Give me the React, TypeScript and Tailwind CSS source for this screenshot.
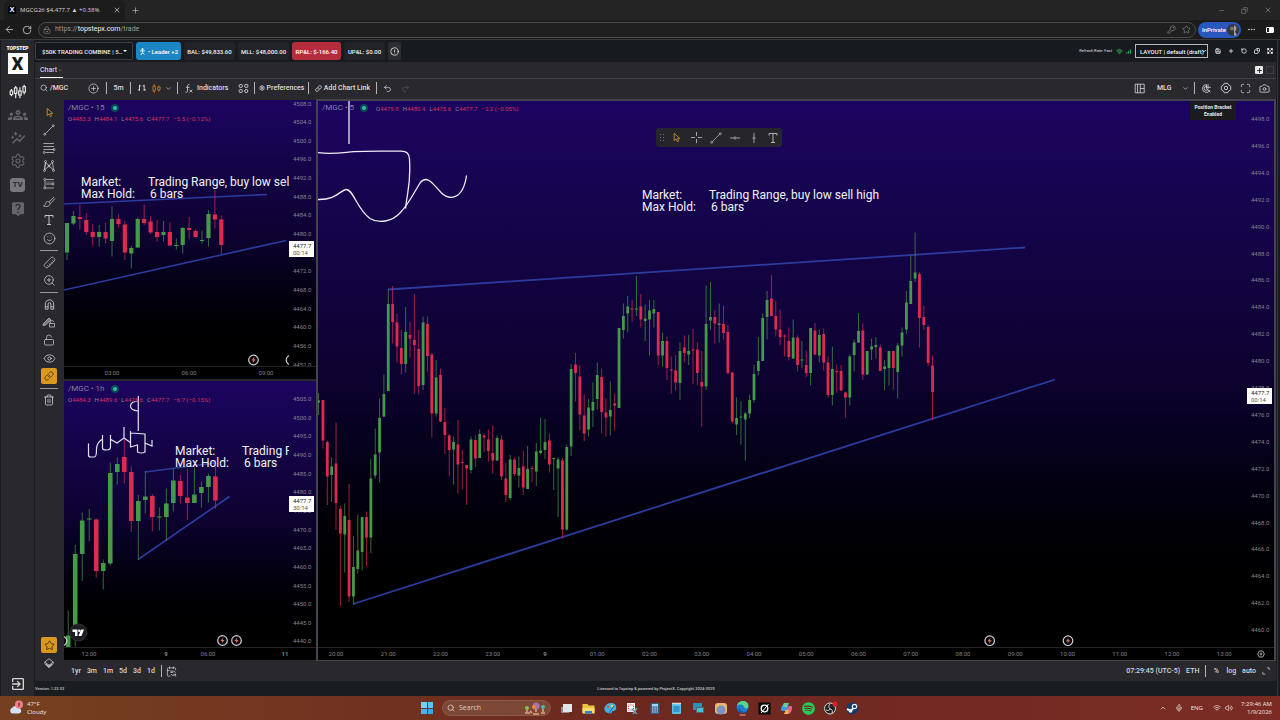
import type { ReactNode } from "react";
import {
  ArrowLeft, Camera, ChevronDown, ChevronUp, CirclePlus, Ellipsis, KeyRound, Link, LockKeyhole, LockOpen, Magnet, Maximize,
  Mic, Minus, Plus, Redo2, RotateCw, RotateCcw, Ruler, Save, Search, Settings, Smile, Star, Trash2, Undo2, Volume2, Wifi, X, ZoomIn,
  Copy, Eye, CircleAlert, CalendarSync, Expand,
} from "lucide-react";
import { MdAutoGraph, MdExitToApp, MdOutlineGroups, MdLiveHelp, MdSignalCellularAlt } from "react-icons/md";
import { FaSpotify } from "react-icons/fa";

// direction, high, body top, body bottom, low
type Candle = ["u" | "d", number, number, number, number];

const candles5m: Candle[] = [
  ["u", 393, 400.5, 402.5, 415], ["d", 400, 400, 440.5, 448.5], ["d", 440.5, 442, 476.5, 505], ["u", 457.5, 466.5, 475, 502],
  ["d", 422.5, 463.5, 503, 530], ["d", 505.5, 509, 533.5, 606], ["u", 503.5, 516, 534.5, 572.5], ["d", 484, 520, 596.5, 602],
  ["u", 536, 567, 596.5, 604.5], ["u", 514.5, 550.5, 569, 573.5], ["u", 517, 517, 552, 570.5], ["d", 511.5, 517, 537.5, 566.5],
  ["u", 458.5, 478.5, 537.5, 553.5], ["u", 428.5, 454.5, 475.5, 478.5], ["u", 398.5, 418, 452.5, 482.5], ["u", 374.5, 394, 416.5, 417],
  ["u", 289, 304, 391, 391], ["d", 286, 304, 322, 343.5], ["d", 313.5, 322.5, 346.5, 362.5], ["d", 330, 348, 364, 374.5],
  ["u", 307, 332, 364, 372.5], ["d", 322, 335, 338.5, 357.5], ["d", 294, 340, 345, 393.5], ["d", 330, 349, 386, 394.5],
  ["u", 316.5, 322.5, 385, 390], ["d", 316.5, 324, 356, 371.5], ["d", 353, 354.5, 413.5, 437.5], ["u", 360, 377.5, 413.5, 416.5],
  ["d", 368.5, 375, 421.5, 422], ["d", 408, 422, 435, 454], ["d", 434, 435.5, 450, 476.5], ["u", 436.5, 442, 449.5, 484.5],
  ["d", 420, 444.5, 464.5, 493.5], ["d", 450, 462, 463, 489.5], ["d", 464.5, 465, 468.5, 505], ["u", 436.5, 439.5, 470, 473.5],
  ["d", 435, 440, 458.5, 467], ["u", 429.5, 434, 458, 458], ["d", 433.5, 435.5, 437.5, 452], ["d", 429.5, 439.5, 451, 461.5],
  ["d", 425.5, 453, 460.5, 473.5], ["u", 435.5, 438, 460.5, 461], ["d", 435.5, 439.5, 476.5, 480], ["d", 462.5, 478.5, 495, 502],
  ["u", 455, 459.5, 498, 500.5], ["d", 457.5, 459.5, 474, 476], ["u", 456.5, 468, 475.5, 487.5], ["d", 450.5, 466.5, 487.5, 495],
  ["u", 446, 469, 489, 489], ["d", 466, 468, 469, 482.5], ["u", 443, 451.5, 471.5, 486], ["u", 417.5, 450.5, 453, 454.5],
  ["u", 419, 442, 450, 459], ["d", 433.5, 440.5, 464.5, 472.5], ["u", 457.5, 458, 459, 490], ["u", 457.5, 459.5, 468.5, 517],
  ["d", 458, 460.5, 529.5, 538.5], ["u", 444.5, 447, 529.5, 531], ["u", 364, 369, 446.5, 456], ["d", 353, 364.5, 373, 401.5],
  ["d", 365, 376.5, 414.5, 430.5], ["d", 394.5, 415.5, 433.5, 441], ["u", 399, 407.5, 429.5, 436.5], ["u", 382.5, 402, 410.5, 427],
  ["u", 362.5, 375, 399, 409.5], ["d", 368.5, 377, 412, 433.5], ["d", 398.5, 412.5, 417.5, 436.5], ["u", 381.5, 410, 416.5, 435.5],
  ["d", 393.5, 403.5, 405.5, 430.5], ["u", 328, 328, 408, 408], ["u", 303.5, 316, 330, 338.5], ["u", 296, 306.5, 313.5, 332.5],
  ["d", 300, 308.5, 309, 321.5], ["u", 276, 308.5, 309, 316], ["d", 294, 306.5, 319.5, 327.5], ["u", 304.5, 318.5, 321, 341],
  ["u", 300, 310.5, 319.5, 355.5], ["u", 300, 309, 313.5, 327.5], ["d", 312, 312, 355.5, 365], ["u", 332.5, 341, 355.5, 366.5],
  ["d", 336.5, 341, 368, 380], ["d", 356.5, 369.5, 370, 393.5], ["d", 355, 370.5, 382.5, 390.5], ["u", 342.5, 351, 383, 400],
  ["d", 335.5, 347.5, 353, 362.5], ["u", 335, 351, 354.5, 365], ["d", 329, 349.5, 350, 384], ["d", 342.5, 349.5, 373, 385.5],
  ["d", 351, 382, 386.5, 426.5], ["u", 285.5, 324, 386.5, 390], ["u", 282, 317, 320.5, 330], ["d", 310, 317, 323.5, 343.5],
  ["u", 303.5, 323.5, 325, 342.5], ["d", 305.5, 324, 333, 339.5], ["d", 325, 332, 373, 374.5], ["d", 372, 372.5, 421.5, 423.5],
  ["u", 397.5, 418, 424.5, 435], ["u", 401.5, 416.5, 417.5, 444.5], ["u", 412, 413.5, 419.5, 460.5], ["u", 394.5, 400, 413.5, 418],
  ["u", 365, 374, 400, 402.5], ["u", 337, 361, 371, 375.5], ["u", 313.5, 318, 361, 361], ["u", 291, 300, 317, 339.5],
  ["d", 275, 298.5, 316, 316], ["d", 301, 316, 329.5, 336.5], ["d", 309.5, 329.5, 337, 345], ["d", 334.5, 335.5, 336.5, 356.5],
  ["d", 327.5, 341, 357, 360.5], ["u", 319.5, 337.5, 358.5, 359], ["d", 335.5, 337.5, 365, 371.5], ["u", 341, 359.5, 360, 368],
  ["d", 350.5, 365, 373, 377], ["u", 328, 328, 373, 385.5], ["d", 323, 330.5, 354.5, 355], ["u", 329.5, 335, 355.5, 362.5],
  ["d", 328.5, 334, 362.5, 370.5], ["d", 356.5, 362.5, 395, 397.5], ["u", 346.5, 369, 395, 405.5], ["d", 364.5, 371, 372, 392.5],
  ["d", 365, 371, 390.5, 391], ["d", 391.5, 392.5, 397.5, 417.5], ["u", 354.5, 356.5, 397.5, 405.5], ["u", 339.5, 342.5, 355, 371.5],
  ["u", 313, 331, 342.5, 343], ["d", 323.5, 330.5, 374.5, 380], ["u", 351, 351, 374.5, 375], ["u", 338.5, 346.5, 349.5, 360],
  ["u", 337, 345, 347, 358.5], ["d", 344.5, 347.5, 371, 371], ["u", 360, 366.5, 369, 390.5], ["u", 351, 351, 368, 385.5],
  ["d", 351, 351, 368, 389.5], ["u", 343, 345.5, 372, 398.5], ["u", 327.5, 332.5, 345.5, 356.5], ["u", 291, 302.5, 329.5, 334],
  ["u", 255.5, 281, 304, 304], ["u", 232.5, 272.5, 278.5, 282], ["d", 272, 274, 318, 347.5], ["d", 305.5, 317, 325, 330],
  ["d", 325, 327, 363, 366], ["d", 355.5, 365.5, 392, 420],
];

const candles15m: Candle[] = [
  ["u", 223, 223, 252.5, 260], ["u", 211, 216, 223.5, 225], ["d", 204.5, 217, 219, 229.5], ["d", 213, 220, 232, 235],
  ["d", 224, 232, 237, 245.5], ["u", 225, 232, 237, 246.5], ["d", 223, 232, 238.5, 243.5], ["u", 206.5, 219, 241, 256.5],
  ["d", 214.5, 219, 224, 227.5], ["d", 221, 224.5, 252.5, 260], ["u", 246, 248, 253.5, 268.5], ["u", 217.5, 219, 247.5, 248],
  ["d", 204.5, 219, 223, 225], ["d", 216.5, 221.5, 232.5, 234], ["d", 220, 232, 237, 241.5], ["u", 221, 232, 235, 241.5],
  ["d", 222.5, 232, 245.5, 246], ["u", 238.5, 245, 246, 249.5], ["u", 227, 228, 245, 253.5], ["d", 217, 228, 230, 239.5],
  ["d", 229, 231, 237, 237], ["u", 230.5, 240, 240.5, 243.5], ["u", 210, 214, 238, 246.5], ["d", 190, 214.5, 219.5, 228.5],
  ["d", 215.5, 219.5, 245, 254],
];

const candles1h: Candle[] = [
  ["u", 610.5, 635.5, 647, 647], ["u", 545, 554, 625, 646.5], ["u", 512.5, 520.5, 554, 581], ["u", 509, 518.5, 519.5, 541.5],
  ["d", 518.5, 519.5, 571, 577.5], ["u", 559.5, 563, 571, 589.5], ["u", 462.5, 473, 563.5, 565.5], ["u", 457.5, 464, 472, 484.5],
  ["d", 438, 457, 472, 483.5], ["d", 466.5, 472, 521, 532], ["u", 495, 501, 521, 560], ["u", 471, 496.5, 500, 513.5],
  ["d", 494, 496, 517, 531.5], ["u", 507.5, 516.5, 517.5, 530.5], ["u", 488.5, 503.5, 517, 540.5], ["u", 468.5, 480.5, 503, 511.5],
  ["d", 475, 481, 496, 503.5], ["d", 468.5, 497.5, 503, 520], ["u", 467.5, 494.5, 503, 503], ["u", 481.5, 487, 493, 507.5],
  ["u", 473.5, 476, 487, 502.5], ["d", 460, 476.5, 500.5, 508.5],
];

function Candles({ data, start, step, width }: { data: Candle[]; start: number; step: number; width: number }) {
  return (
    <g>
      {data.map(([dir, high, top, bottom, low], i) => {
        const x = start + i * step;
        const color = dir === "u" ? "#449a48" : "#dc2a50";
        return (
          <g key={i} fill={color}>
            <rect x={x - 0.5} y={high} width={1} height={low - high} opacity={0.7} />
            <rect x={x - width / 2} y={top} width={width} height={Math.max(1, bottom - top)} />
          </g>
        );
      })}
    </g>
  );
}

function Note({ x, y, market }: { x: number; y: number; market: string }) {
  return (
    <g fill="#f2f2f5" className="text-[12px]">
      <text x={x} y={y}>Market:</text>
      <text x={x + 67} y={y}>{market}</text>
      <text x={x} y={y + 12}>Max Hold:</text>
      <text x={x + 69} y={y + 12}>6 bars</text>
    </g>
  );
}

function NewsEvent({ x, y }: { x: number; y: number }) {
  return (
    <g transform={`translate(${x} ${y})`}>
      <circle r="4.8" fill="#0b0710" stroke="#cfcfd4" strokeWidth="1.2" />
      <path d="M.8-3-2.100.5H-.2L-.8 3 2.100-.5H.2Z" fill="#f0745c" />
    </g>
  );
}

type PaneProps = {
  interval: string;
  ohlc: string[];
  change: string;
  inline?: boolean;
  prices: { first: number; y: number; gap: number; step: number; count: number };
  last: { y: number; timer: string };
  times: [string, number][];
  origin: [number, number];
  children: ReactNode;
  gear?: boolean;
};

function ChartPane({ interval, ohlc, change, inline, prices, last, times, origin, children, gear }: PaneProps) {
  const [ox, oy] = origin;
  const labels = Array.from({ length: prices.count }, (_, i) => ({
    y: prices.y + i * prices.gap,
    text: (prices.first - i * prices.step).toFixed(1),
  })).filter((l) => l.y < last.y + 3 || l.y > last.y + 13);
  return (
    <section className="relative flex min-h-0 min-w-0 flex-1 flex-col bg-linear-to-b from-[#1c0560] via-[#0d022f] to-black to-95%">
      <div className="flex min-h-0 flex-1">
        <svg className="h-full min-w-0 flex-1" role="img" aria-label={`/MGC ${interval} chart`}>
          <g transform={`translate(${-ox} ${-oy})`}>{children}</g>
        </svg>
        <svg className="h-full w-[27px]">
          <g fill="#85828e" className="text-[6px]">
            {labels.map((l) => (
              <text key={l.text} x={4} y={l.y - oy + 2}>{l.text}</text>
            ))}
          </g>
          <rect y={last.y - oy} width={25} height={16} fill="#fff" />
          <g fill="#222" className="text-[6px]">
            <text x={4} y={last.y - oy + 7}>4477.7</text>
            <text x={4} y={last.y - oy + 14} fill="#555">{last.timer}</text>
          </g>
        </svg>
      </div>
      <div className="flex h-[13px] shrink-0 border-t border-[#26242b] bg-black">
        <svg className="h-3 min-w-0 flex-1">
          <g fill="#85838a" textAnchor="middle" className="text-[6px]">
            {times.map(([label, x]) => (
              <text key={label} x={x - ox} y={8} fontWeight={label.length < 3 ? 700 : 400}>{label}</text>
            ))}
          </g>
        </svg>
        <div className="flex w-[27px] items-center justify-center">
          {gear && (
            <svg width="8" height="8" viewBox="0 0 8 8" fill="none" stroke="#a5a5aa">
              <path d="M2.3 1h3.4L7.4 4 5.7 7H2.3L.6 4Z" />
              <circle cx="4" cy="4" r="1" />
            </svg>
          )}
        </div>
      </div>
      <div className={inline ? "absolute top-px left-1 flex items-center gap-2" : "absolute top-0.5 left-1 flex flex-col"}>
        <div className="flex h-3 items-center gap-1.5 text-[8px] text-[#85829a]">
          /MGC • {interval}
          <span className="size-2 rounded-full border-2 border-[#0c4458] bg-[#2fc0a0]" />
        </div>
        <div className="flex h-2 items-center gap-1 text-[6px] text-[#d8305c]">
          {ohlc.map((v) => (
            <span key={v}><span className="text-[#8b88a0]">{v[0]}</span>{v.slice(1)}</span>
          ))}
          <span>{change}</span>
        </div>
      </div>
    </section>
  );
}

function Icon({ children, size = 13, box = 28, w = 1.6 }: { children: ReactNode; size?: number; box?: number; w?: number }) {
  return (
    <svg width={size} height={size} viewBox={`0 0 ${box} ${box}`} fill="none" stroke="currentColor" strokeWidth={w} strokeLinejoin="round">
      {children}
    </svg>
  );
}

const CursorIcon = () => (
  <span className="text-[#c08a28]">
    <Icon size={13} w={2}><path d="M9 5v16l4-4 3 6 3-2-3-5h5Z" /></Icon>
  </span>
);
const LineIcon = () => (
  <Icon size={14}><path d="M7 21 21 7" /><circle cx="5.5" cy="22.5" r="2" /><circle cx="22.5" cy="5.5" r="2" /></Icon>
);
const TextIcon = () => (
  <Icon size={14} w={2}><path d="M6 9V5h16v4M14 5v18M10 23h8" /></Icon>
);

const drawTools: { name: string; icon: ReactNode }[] = [
  { name: "Cursor", icon: <CursorIcon /> },
  { name: "Trend line", icon: <LineIcon /> },
  { name: "Fib retracement", icon: <Icon size={14}><path d="M3 5h21M3 11h21M3 17h21M7 23h17" /><circle cx="4.5" cy="23" r="2" /><circle cx="24" cy="17" r="2" /></Icon> },
  { name: "Patterns", icon: <Icon size={14}><path d="M5 22 7 6l7 8 7-8 2 16M5 22l9-8 9 8M7 6l-2 16" /><circle cx="7" cy="5" r="2" /><circle cx="21" cy="5" r="2" /><circle cx="5" cy="23" r="2" /><circle cx="23" cy="23" r="2" /><circle cx="14" cy="14" r="2" /></Icon> },
  { name: "Forecasting", icon: <Icon size={14}><path d="M8 5h16M8 14h12M8 22h16M6 7v13" /><circle cx="5.5" cy="5" r="2" /><circle cx="5.5" cy="22" r="2" /><circle cx="22" cy="14" r="2" /><path d="M9 10h14" strokeDasharray="2 2" /></Icon> },
  { name: "Brush", icon: <Icon size={14}><path d="M3 22c6 2 13 1 13-5 0-3-4-5-7-3-4 3 0 6-6 8ZM14 14 24 4M17 17 26 7" /></Icon> },
  { name: "Text", icon: <TextIcon /> },
  { name: "Icons", icon: <Smile size={13} strokeWidth={1.5} /> },
  { name: "", icon: null },
  { name: "Measure", icon: <Ruler size={13} strokeWidth={1.5} className="rotate-90" /> },
  { name: "Zoom in", icon: <ZoomIn size={13} strokeWidth={1.5} /> },
  { name: "", icon: null },
  { name: "Magnet", icon: <Icon size={13} w={2}><path d="M5 24V13a9 9 0 0 1 18 0v11h-6V13a3 3 0 0 0-6 0v11ZM5 19h6M17 19h6" /></Icon> },
  { name: "Stay in drawing mode", icon: <Icon size={14}><path d="m3 17 11-11 4 4L7 20l-5 1Z" fill="currentColor" fillOpacity=".5" /><rect x="15" y="17" width="10" height="7" /><path d="M17 17v-3c0-4 6-4 6 0" /></Icon> },
  { name: "Lock drawings", icon: <LockOpen size={12} strokeWidth={1.6} /> },
  { name: "Hide drawings", icon: <Eye size={13} strokeWidth={1.5} /> },
];

function ToolSep() {
  return <div className="flex h-1.5 shrink-0 items-center"><span className="h-px w-4.5 bg-[#97979c]" /></div>;
}

function Divider() {
  return <span className="h-3 w-px shrink-0 bg-[#b4b4b8]" />;
}

function BrowserChrome() {
  return (
    <header className="shrink-0 bg-[#242424] font-['Open_Sans',sans-serif] text-[#d8d8d8]">
      <div className="flex h-5 items-center">
        <div className="ml-1 flex h-5 w-[121px] items-center rounded-t-md bg-[#1c1c1c] px-1">
          <span className="flex h-2 w-2 items-center justify-center bg-black text-[7px] font-bold text-white">X</span>
          <span className="ml-1 flex-1 text-[6px] font-medium whitespace-nowrap">MGCG26 $4,477.7 ▲ +0.38%</span>
          <button aria-label="Close tab"><X size={8} /></button>
        </div>
        <button aria-label="New tab" className="ml-1.5"><Plus size={9} strokeWidth={1.5} /></button>
        <div className="ml-auto flex items-center gap-4 pr-2 text-[#9a9a9a]">
          <button aria-label="Minimize"><Minus size={7} strokeWidth={1.5} /></button>
          <button aria-label="Restore"><Copy size={7} strokeWidth={1.8} className="-scale-x-100" /></button>
          <button aria-label="Close"><X size={8} strokeWidth={1.8} /></button>
        </div>
      </div>
      <div className="flex h-[19px] items-center bg-[#1b1b1b] pr-0.5 pl-1">
        <button aria-label="Back" className="w-[18px]"><ArrowLeft size={11} strokeWidth={1.6} /></button>
        <button aria-label="Refresh" className="w-4"><RotateCw size={10} strokeWidth={1.8} /></button>
        <div className="flex h-4 flex-1 items-center rounded-full border border-[#4a4a4a] bg-[#1f1f1f] px-1">
          <LockKeyhole size={8} strokeWidth={1.6} className="text-[#999]" />
          <span className="ml-1 font-['Roboto',sans-serif] text-[7px] text-[#999]">https://<span className="text-[#f0f0f0]">topstepx.com</span>/trade</span>
          <KeyRound size={9} strokeWidth={1.6} className="ml-auto text-[#999]" />
          <Star size={9} strokeWidth={1.6} className="ml-1.5 text-[#999]" />
        </div>
        <button className="ml-0.5 flex h-4 w-[43px] items-center justify-between rounded-full bg-[#2858bd] pr-0.5 pl-1 font-['Roboto',sans-serif] text-[6px] font-medium text-white">
          InPrivate
          <svg width="12" height="12" viewBox="0 0 12 12" className="shrink-0"><circle cx="6" cy="6" r="6" fill="#33353a" /><path d="M6 1.500c3 0 4 2 3 4.500L8 8l2 3-3 1V1.500Z" fill="#a8a29c" /><circle cx="5" cy="4.500" r="2" fill="#77706a" /></svg>
        </button>
        <button aria-label="Menu" className="ml-1.5"><Ellipsis size={9} /></button>
        <button aria-label="Sidebar" className="ml-2.5 flex h-1.5 w-2 justify-end rounded-[1px] border border-white"><span className="h-full w-1 bg-white" /></button>
        <span className="w-1" />
      </div>
    </header>
  );
}

function Rail() {
  return (
    <nav className="flex w-[34px] shrink-0 flex-col items-center border-r border-[#1d1d20] bg-[#29292d] pt-1 text-[#66666a]">
      <div className="text-[5px] leading-[9px] font-black text-white">TOPSTEP</div>
      <div className="mb-1.5 flex h-[21px] w-5 items-center justify-center bg-white text-[18px] leading-none font-black text-[#1a1a1a]">X</div>
      <button aria-label="Trade" className="flex h-[23px] items-center text-[#e4e4e6]">
        <Icon size={17} w={2}>
          <path d="M4 10v12M11 5v20M18 7v18M25 3v16" />
          <rect x="2" y="13" width="4" height="6" fill="#29292d" /><rect x="9" y="8" width="4" height="9" fill="#29292d" />
          <rect x="16" y="13" width="4" height="7" fill="#29292d" /><rect x="23" y="6" width="4" height="9" fill="#29292d" />
        </Icon>
      </button>
      <button aria-label="Community" className="flex h-[23px] items-center"><MdOutlineGroups size={20} /></button>
      <button aria-label="Performance" className="flex h-[23px] items-center"><MdAutoGraph size={16} /></button>
      <button aria-label="Settings" className="flex h-6 items-center"><Settings size={16} strokeWidth={1.6} /></button>
      <button className="flex h-6 items-center"><span className="flex h-[14px] w-[15px] items-center justify-center rounded-[3px] bg-[#78787c] text-[8px] font-bold text-[#29292d]">TV</span></button>
      <button aria-label="Help" className="flex h-6 items-center"><MdLiveHelp size={16} /></button>
      <button aria-label="Log out" className="mt-auto mb-1 text-[#d5d5d8]"><MdExitToApp size={16} /></button>
    </nav>
  );
}

function AccountBar() {
  return (
    <div className="flex h-[22px] shrink-0 items-center gap-[3px] bg-[#171b1f] pr-1 text-[6px] font-medium text-[#f0f0f2]">
      <div className="relative h-[18px] w-[98px]">
        <select aria-label="Account" className="h-full w-full appearance-none rounded-[2px] border border-[#3b3e43] bg-[#14171b] pr-2 pl-1.5">
          <option>$50K TRADING COMBINE | 5…</option>
        </select>
        <span className="pointer-events-none absolute top-1/2 right-1.5 -translate-y-1/2 border-x-2 border-t-2 border-x-transparent border-t-white" />
      </div>
      <button className="flex h-[18px] w-[45px] items-center justify-center gap-0.5 rounded-[3px] bg-[#1c86c2] text-white">
        <Icon size={7} box={12} w={1.6}><circle cx="6" cy="2" r="1.2" fill="currentColor" /><path d="M2 5h8M6 5v3l-3 4M6 8l3 3" /></Icon>
        <span>• Leader +2</span>
      </button>
      <span className="flex h-[18px] w-[51px] items-center justify-center rounded-[3px] bg-[#212327]">BAL: $49,833.60</span>
      <span className="flex h-[18px] w-[51px] items-center justify-center rounded-[3px] bg-[#212327]">MLL: $48,000.00</span>
      <span className="flex h-[18px] w-[49px] items-center justify-center rounded-[3px] bg-[#b52d3a] text-white">RP&amp;L: $-166.40</span>
      <span className="flex h-[18px] w-[41px] items-center justify-center rounded-[3px] bg-[#212327]">UP&amp;L: $0.00</span>
      <button aria-label="Account info" className="flex h-[18px] w-[13px] items-center justify-center rounded-[2px] bg-[#2b2d30]"><CircleAlert size={9} /></button>
      <div className="ml-auto flex items-center gap-1 text-[4px]">
        <span className="text-[#c0c0c4]">Refresh Rate: Fast</span>
        <Wifi size={7} strokeWidth={3} className="text-[#34a853]" />
        <MdSignalCellularAlt size={7} className="-ml-0.5 text-[#34c060]" />
      </div>
      <div className="relative h-3.5 w-[73px]">
        <select aria-label="Layout" className="h-full w-full appearance-none border border-[#b9b9bc] bg-[#14171b] pl-1 text-[6px] font-medium">
          <option>LAYOUT | default (draft)</option>
        </select>
        <ChevronDown size={6} strokeWidth={4} className="pointer-events-none absolute top-1 right-px" />
      </div>
      <div className="ml-1 flex items-center gap-[7px]">
        <button aria-label="Save layout"><Save size={6} strokeWidth={3} /></button>
        <button aria-label="Add layout"><Plus size={6} strokeWidth={3} /></button>
        <button aria-label="Reset layout"><RotateCcw size={6} strokeWidth={3} /></button>
        <button aria-label="Pop out"><Copy size={6} strokeWidth={3} className="-scale-x-100" /></button>
        <button aria-label="Expand"><Expand size={6} strokeWidth={4} /></button>
      </div>
    </div>
  );
}

function ChartToolbar() {
  return (
    <div className="flex h-5 shrink-0 items-center pr-1.5 pb-0.5 pl-[5px] text-[7px] font-medium text-[#dcdce0]">
      <button className="flex w-12 items-center gap-0.5"><Search size={8} strokeWidth={2} />/MGC</button>
      <button aria-label="Compare" className="w-[18px]"><CirclePlus size={11} strokeWidth={1.5} /></button>
      <Divider />
      <button className="w-[23px] text-center">5m</button>
      <Divider />
      <button aria-label="Bar style" className="ml-1.5 w-3.5"><Icon size={10} w={2.6}><path d="M7 5v17M7 19H3M7 8h4M20 5v17M20 8h-4M20 19h5" /></Icon></button>
      <button aria-label="Candles" className="w-3.5 text-[#d07a22]"><Icon size={11} w={2.2}><path d="M8 3v5M8 20v5M20 6v4M20 18v4" /><rect x="5" y="8" width="6" height="12" /><rect x="17" y="10" width="6" height="8" /></Icon></button>
      <button aria-label="Candle menu" className="w-3"><ChevronDown size={7} /></button>
      <Divider />
      <button className="ml-1.5 flex w-[54px] items-center gap-0.5">
        <Icon size={11} w={2}><path d="M14 4c-5-2-5 4-5 8v8c0 4-3 5-5 3M5 11h9M14 17l7 7M21 17l-7 7" /></Icon>
        Indicators
      </button>
      <button aria-label="Layouts" className="w-4">
        <Icon size={11} w={2.2}><rect x="3" y="4" width="8" height="7" rx="2" /><rect x="17" y="4" width="8" height="7" rx="2" /><rect x="3" y="17" width="8" height="7" rx="2" /><circle cx="21" cy="20.5" r="4" /></Icon>
      </button>
      <Divider />
      <button className="flex w-[53px] items-center justify-center gap-0.5"><Settings size={6} strokeWidth={3} />Preferences</button>
      <Divider />
      <button className="flex w-[67px] items-center justify-center gap-0.5"><Link size={7} strokeWidth={2.5} />Add Chart Link</button>
      <Divider />
      <button aria-label="Undo" className="ml-1.5 w-[18px]"><Undo2 size={9} strokeWidth={1.8} /></button>
      <button aria-label="Redo" className="text-[#55555a]"><Redo2 size={9} strokeWidth={1.8} /></button>
      <div className="ml-auto flex items-center">
        <button aria-label="Grid layout" className="w-[23px]"><Icon size={11} w={2}><rect x="3" y="3" width="23" height="22" /><path d="M16 3v22M16 14h10M9 3v22" /></Icon></button>
        <button className="w-[25px] text-left">MLG</button>
        <button aria-label="Layout menu" className="w-3"><ChevronDown size={7} /></button>
        <Divider />
        <button aria-label="Position bracket" className="ml-1.5 w-[19px]"><Icon size={11} w={2}><path d="M14 4a10 10 0 1 0 9 14M14 4v10l10 10M18 3v8h7" /><circle cx="13" cy="14" r="5" /></Icon></button>
        <button aria-label="Chart settings" className="w-5"><Icon size={12} w={2}><path d="M10 3h8l2 4 5 3v8l-5 3-2 4h-8l-2-4-5-3v-8l5-3Z" /><circle cx="14" cy="14" r="4" /></Icon></button>
        <button aria-label="Fullscreen" className="w-[19px]"><Maximize size={11} strokeWidth={1.5} /></button>
        <button aria-label="Snapshot"><Camera size={11} strokeWidth={1.7} /></button>
      </div>
    </div>
  );
}

function DrawingTools() {
  return (
    <div className="flex w-[29px] shrink-0 flex-col items-center pt-1 pr-px text-[#c2c2c6]">
      {drawTools.map((t, i) =>
        t.icon ? (
          <button key={i} aria-label={t.name} className="flex h-[18px] shrink-0 items-center">{t.icon}</button>
        ) : (
          <ToolSep key={i} />
        )
      )}
      <button aria-label="Sync drawings" className="my-px flex size-4 shrink-0 items-center justify-center rounded-[2px] bg-[#d9981f] text-[#3b2a08]"><Link size={10} strokeWidth={1.8} /></button>
      <ToolSep />
      <button aria-label="Remove drawings" className="flex h-[18px] shrink-0 items-center"><Trash2 size={12} strokeWidth={1.7} /></button>
      <button aria-label="Favorites" className="mt-auto flex size-4 shrink-0 items-center justify-center rounded-[2px] bg-[#d9981f] text-[#3b2a08]"><Star size={11} strokeWidth={1.8} /></button>
      <button aria-label="Object tree" className="mt-1 mb-3"><Icon size={12} w={2}><path d="m4 12 10-8 10 8-10 7ZM4 12v3l10 10 10-10v-3" /><path d="m7 17 7 7 7-7-7 4Z" fill="currentColor" /></Icon></button>
    </div>
  );
}

const hours = ["20:00", "21:00", "22:00", "23:00", "9", "01:00", "02:00", "03:00", "04:00", "05:00", "06:00", "07:00", "08:00", "09:00", "10:00", "11:00", "12:00", "13:00"];

function Charts() {
  return (
    <div className="flex min-h-0 min-w-0 flex-1">
      <div className="flex w-[252px] shrink-0 flex-col gap-0.5 bg-[#29292d] py-px">
        <ChartPane
          interval="15"
          ohlc={["O4483.3", "H4484.1", "L4475.6", "C4477.7"]}
          change="−5.5 (−0.12%)"
          prices={{ first: 4508, y: 103.5, gap: 18.65, step: 4, count: 15 }}
          last={{ y: 241, timer: "00:14" }}
          times={[["03:00", 112], ["06:00", 189], ["09:00", 266]]}
          origin={[64, 100]}
        >
          <path d="M64 204 267 194.500M64 290 286 240.500" stroke="#2c3c9e" strokeWidth="1.600" />
          <Candles data={candles15m} start={67} step={6.43} width={4.2} />
          <Note x={81} y={186} market="Trading Range, buy low sel" />
          <NewsEvent x={253.5} y={360} />
          <NewsEvent x={291} y={360} />
        </ChartPane>
        <ChartPane
          interval="1h"
          ohlc={["O4484.3", "H4489.6", "L4475.6", "C4477.7"]}
          change="−6.7 (−0.15%)"
          prices={{ first: 4505, y: 399, gap: 18.65, step: 5, count: 14 }}
          last={{ y: 496, timer: "30:14" }}
          times={[["12:00", 89], ["9", 166], ["06:00", 208], ["11", 285]]}
          origin={[64, 381]}
        >
          <path d="M145 472 215 463M138 559.500 229.500 496.500" stroke="#2c3c9e" strokeWidth="1.600" />
          <Candles data={candles1h} start={68.2} step={7.01} width={4.6} />
          <path
            d="M138.300 396v35M138 401c-10 1-10 9 0 10M88.500 443.500V455q0 2 2 2h4q2 0 2-8 0-6 6-10v-4M102.500 439v9q0 2 4 2 4 0 4-3v-12M110 439l7 4 7-5v-11M124 438l7 5M130.500 431v16l7-2v7q4 2 7.500 0v-18l-14-1M145 443l7 3v-6"
            fill="none" stroke="#e2e0ee" strokeWidth="1.200"
          />
          <Note x={175} y={455} market="Trading F" />
          <NewsEvent x={62} y={641} />
          <NewsEvent x={222.5} y={640.5} />
          <NewsEvent x={236.5} y={640.5} />
          <circle cx="78.300" cy="632.500" r="8.500" fill="#1c1c22" stroke="#34343a" />
          <path d="M72.500 629.500h5v6.500h-2.500v-4h-2.500ZM81 629.500h3l-2.500 6.500h-3Z" fill="#fff" />
          <circle cx="79.300" cy="630.700" r="1.200" fill="#fff" />
        </ChartPane>
      </div>
      <div className="relative flex min-w-0 flex-1 border-2 border-b border-[#45434d]">
        <ChartPane
          interval="5"
          inline
          gear
          ohlc={["O4479.8", "H4480.4", "L4475.6", "C4477.7"]}
          change="−2.2 (−0.05%)"
          prices={{ first: 4498, y: 119, gap: 26.9, step: 2, count: 20 }}
          last={{ y: 388, timer: "00:14" }}
          times={hours.map((h, i) => [h, 336 + i * 52.25])}
          origin={[318, 101]}
        >
          <path d="M388 289.500 1025 247.500M353 604 1055 379.500" stroke="#2c3c9e" strokeWidth="1.800" />
          <Candles data={candles5m} start={318.6} step={4.354} width={2.8} />
          <g fill="none" stroke="#efedf8" strokeWidth="1.300">
            <path d="M349 100v44" />
            <path d="M318 152.700c14 2 24 0 36-1 14-1 32-.500 47-.500 6 0 8 2 8.500 8 1.500 24-1.500 28-4 49.500" />
            <path d="M318 199.500c18 .500 22-9 28-10 7-1 11 20 24 29 9 5.500 22 3 30-5.500 8-8 14-20 20-30 7-9 13 1 21 9.500 8 8 22 8 25.500-17" />
          </g>
          <Note x={642} y={199} market="Trading Range, buy low sell high" />
          <NewsEvent x={989.7} y={640.7} />
          <NewsEvent x={1068} y={640.7} />
        </ChartPane>
        <div role="toolbar" aria-label="Favorite tools" className="absolute top-[27px] left-[338px] flex h-[19px] w-[126px] items-center justify-between rounded-[3px] bg-[#26252b] pr-0.5 pl-1 text-[#b2b2b6]">
          <span className="grid grid-cols-2 gap-0.5">
            {[0, 1, 2, 3, 4, 5].map((d) => <i key={d} className="size-px bg-[#6a6a6e]" />)}
          </span>
          <button aria-label="Cursor"><CursorIcon /></button>
          <button aria-label="Cross"><Icon size={13} w={2}><path d="M14 2v9M14 17v9M2 14h9M17 14h9" /></Icon></button>
          <button aria-label="Trend line"><LineIcon /></button>
          <button aria-label="Horizontal line"><Icon size={12} w={2}><path d="M2 14h9M17 14h9" /><circle cx="14" cy="14" r="2.5" /></Icon></button>
          <button aria-label="Vertical line"><Icon size={12} w={2}><path d="M14 2v9M14 17v9" /><circle cx="14" cy="14" r="2.5" /></Icon></button>
          <button aria-label="Text"><TextIcon /></button>
        </div>
        <div role="tooltip" className="absolute top-0 right-[38px] flex h-[19px] w-[46px] flex-col items-center justify-center rounded-[1px] bg-[#1b1b1e] text-[5px] leading-[7px] font-bold text-[#e8e8ea]">
          <span>Position Bracket</span>
          <span>Enabled</span>
        </div>
      </div>
    </div>
  );
}

function Taskbar() {
  return (
    <footer className="relative flex h-6 shrink-0 items-center justify-center bg-linear-to-r from-[#75401f] via-[#6c2820] to-[#7a2c24] font-['Open_Sans',sans-serif] text-[6px] text-[#f3e4e0]">
      <div className="absolute inset-y-0 left-2 flex items-center gap-1">
        <svg width="15" height="16" viewBox="0 0 15 16">
          <path d="M4 13.500a3 3 0 0 1 0-5.500 4 4 0 0 1 7 0 2.800 2.800 0 0 1 0 5.500Z" fill="#d5e2f6" />
          <circle cx="11" cy="4.500" r="4" fill="#ee7f8b" />
          <path d="M11 2.500v4" stroke="#4a1520" />
        </svg>
        <div className="leading-[8px]">47°F<br />Cloudy</div>
      </div>
      <div className="flex items-center gap-[9px]">
        <button aria-label="Start" className="grid size-3 grid-cols-2 gap-px"><i className="bg-[#6fd3f7]" /><i className="bg-[#58c4f2]" /><i className="bg-[#45b4ec]" /><i className="bg-[#38a4e6]" /></button>
        <label className="flex h-4 w-[109px] items-center rounded-full border border-[#8d5745] bg-[#7e4836] px-1">
          <Search size={8} />
          <input aria-label="Search" placeholder="Search" className="ml-1 w-14 bg-transparent text-[7px] outline-none placeholder:text-[#e0cbc4]" />
          <svg width="22" height="13" viewBox="0 0 22 13" className="ml-auto">
            <circle cx="3" cy="6" r="2" fill="#8bbf5a" /><circle cx="12" cy="4" r="3.500" fill="#a96fb0" /><circle cx="10" cy="5" r="2" fill="#e8893c" /><circle cx="19" cy="5" r="2" fill="#4bb5a8" />
            <path d="M3 8v2M12 7v3M19 7v3M1 11h5M9 12h6M17 11h4M6 9l2 2" stroke="#e3a483" strokeWidth="1.500" />
          </svg>
        </label>
        <svg aria-label="Task view" width="13" height="13" viewBox="0 0 13 13"><rect x="1" y="5" width="8" height="6" fill="#8d8d90" /><rect x="3" y="2" width="9" height="8" fill="#e4e4e4" /></svg>
        <svg width="13" height="13" viewBox="0 0 13 13"><path d="M.500 2h5l1 1.500h6V11H.500Z" fill="#f2c33e" /><path d="M.500 6h12v5.500H.500Z" fill="#fbdc6a" /><path d="M3 9h7v2.500H3Z" fill="#2e82d0" /></svg>
        <svg width="13" height="13" viewBox="0 0 13 13"><path d="M7 1c4 0 6 3 5 6s-4 1-4 3-5 2-7-1S2 1 7 1Z" fill="#44b2de" /><circle cx="4" cy="5" r="1.200" fill="#e84a4a" /><circle cx="8" cy="4" r="1.200" fill="#f4cf47" /><path d="m5 11 5-7" stroke="#186ca8" /></svg>
        <svg width="13" height="13" viewBox="0 0 13 13"><rect x="1" y="1" width="8" height="9" fill="#f2f2f2" /><rect x="2.500" y="3" width="5" height="5" fill="none" stroke="#d34141" strokeDasharray="1 1" /><path d="m6 7 5 5M11 6l-4 6" stroke="#7795aa" strokeWidth="1.500" /></svg>
        <svg width="13" height="13" viewBox="0 0 13 13"><rect x="2.500" y="1" width="9" height="11" rx="1" fill="#315f88" /><rect x="4" y="2" width="6" height="2.500" fill="#9cd9f5" /><path d="M4 6h1.500M6.300 6h1.500M8.600 6H10M4 8h1.500M6.300 8h1.500M8.600 8H10M4 10h1.500M6.300 10h1.500M8.600 10H10" stroke="#dcecf6" strokeWidth="1.200" /></svg>
        <svg width="13" height="13" viewBox="0 0 13 13"><rect x="2" y="1" width="9" height="11" rx="1" fill="#54bfe9" /><path d="M2 1.500h9" stroke="#d4d8dc" strokeWidth="1.500" /><path d="M3.500 5h6M3.500 7h6M3.500 9h6" stroke="#1769a4" /></svg>
        <svg width="13" height="13" viewBox="0 0 13 13"><rect x="1" y="1" width="9" height="7" fill="#2a93b2" /><rect x="4" y="5" width="8" height="6" fill="#55656f" /><rect x="5" y="6" width="6" height="4" fill="#3fc4d8" /></svg>
        <svg width="13" height="13" viewBox="0 0 13 13"><rect x="1" y="1" width="12" height="11" rx="3" fill="#e8b876" /><circle cx="7" cy="8" r="4.500" fill="#7c93c4" /></svg>
        <svg width="13" height="16" viewBox="0 0 13 16"><circle cx="6.500" cy="7" r="6" fill="#1b7fcf" /><path d="M1 6c1-6 11-7 11.500 0 0 3-4 3-4.500 1-1-3-5-3-7-1Z" fill="#58d48f" /><path d="M4 8c0 4 5 5 7 3-2 3-7 3-9 0Z" fill="#135ba8" /><path d="M3.500 15h6" stroke="#f0a79a" /></svg>
        <svg width="13" height="13" viewBox="0 0 13 13"><rect x=".500" y=".500" width="12" height="12" fill="#0a0a0a" /><circle cx="6.500" cy="6.500" r="3.300" fill="none" stroke="#fff" strokeWidth="1.300" /><path d="m3 11 7.500-9" stroke="#fff" /></svg>
        <svg width="13" height="13" viewBox="0 0 13 13"><path d="M4 1h5l-2 8H2.500C0 9 1 6 2 4Z" fill="#35a0e8" /><path d="M9 4h2c2 0 1 3 0 6l-2 2H4l2-4Z" fill="#e5668a" /><path d="M4 1h4l-1 4H3Z" fill="#6cd08a" /><path d="M6 8 4 12h4l1-4Z" fill="#f2b544" /></svg>
        <FaSpotify size={13} color="#25ce5b" />
        <svg width="13" height="14" viewBox="0 0 13 14"><circle cx="6" cy="7.500" r="5.500" fill="#222" stroke="#d8d8d8" /><path d="M6 3c-2 2-1 4 0 5M2 9c2 1 4 0 4-1M6 8c2 0 3 2 2 4" fill="none" stroke="#d8d8d8" /><circle cx="11" cy="3" r="2.500" fill="#e02020" /></svg>
        <svg width="13" height="13" viewBox="0 0 13 13"><circle cx="6.500" cy="6.500" r="6" fill="#153a66" /><path d="m1 7 4 2 3-4" fill="none" stroke="#eef4fa" strokeWidth="2" /><circle cx="8.500" cy="4.500" r="2.200" fill="#153a66" stroke="#eef4fa" strokeWidth="1.200" /><circle cx="4.500" cy="9" r="1.800" fill="#eef4fa" /></svg>
      </div>
      <div className="absolute inset-y-0 right-2 flex items-center">
        <ChevronUp size={8} className="mr-2" />
        <Mic size={8} className="mr-2" />
        <span className="mr-2.5">ENG</span>
        <Wifi size={8} className="mr-1" />
        <Volume2 size={8} className="mr-2" />
        <div className="text-right leading-[8px]">7:29:46 AM<br />1/9/2026</div>
      </div>
    </footer>
  );
}

export default function App() {
  return (
    <div className="flex h-screen flex-col overflow-hidden bg-[#171b1f]">
      <BrowserChrome />
      <div className="flex min-h-0 flex-1 border-t border-[#3a3a3d] pl-px font-['Roboto',sans-serif]">
        <Rail />
        <div className="mr-0.5 flex min-w-0 flex-1 flex-col border-r border-[#34363a]">
          <AccountBar />
          <div className="mr-px flex min-h-0 flex-1 flex-col bg-[#29292d]">
            <div className="flex h-[17px] shrink-0 items-end justify-between border-b border-[#3f3f44] pr-0.5 pl-[5px]">
              <button className="h-4 w-[23px] border-b border-white pt-0.5 text-left text-[7px] text-[#e4e4e6]">Chart <span className="text-[5px] text-[#666]">×</span></button>
              <div className="flex h-4 items-center gap-[3px]">
                <button aria-label="Add tab" className="flex size-2 items-center justify-center rounded-[1px] bg-[#e8e8ea] text-[#222]"><Plus size={7} strokeWidth={3} /></button>
                <span className="size-2 border border-[#3d3d41]" />
              </div>
            </div>
            <ChartToolbar />
            <div className="flex min-h-0 flex-1">
              <DrawingTools />
              <div className="flex min-w-0 flex-1 flex-col">
                <Charts />
                <div className="flex h-5 shrink-0 items-center justify-between pr-1.5 pl-[7px] text-[7px] font-medium text-[#d6d6da]">
                  <div className="flex items-center gap-1.5">
                    {["1yr", "3m", "1m", "5d", "3d", "1d"].map((r) => <button key={r}>{r}</button>)}
                    <div className="flex items-center gap-1">
                      <Divider />
                      <button aria-label="Go to date"><CalendarSync size={11} strokeWidth={1.5} /></button>
                    </div>
                  </div>
                  <div className="flex items-center gap-1.5">
                    <button>07:29:45 (UTC-5)</button>
                    <button>ETH</button>
                    <Divider />
                    <button className="w-2">%</button>
                    <button>log</button>
                    <button>auto</button>
                    <button aria-label="Maximize pane"><Icon size={8} w={2.5}><path d="M3 17v8h8M17 3h8v8" /></Icon></button>
                  </div>
                </div>
              </div>
            </div>
          </div>
          <div className="relative flex h-[15px] shrink-0 items-center justify-center bg-[#191d20] text-[4px] font-medium text-[#c5c5c8]">
            <span className="absolute left-0">Version: 1.22.52</span>
            <span>Licensed to Topstep &amp; powered by ProjectX. Copyright 2024-2025</span>
          </div>
        </div>
      </div>
      <Taskbar />
    </div>
  );
}
